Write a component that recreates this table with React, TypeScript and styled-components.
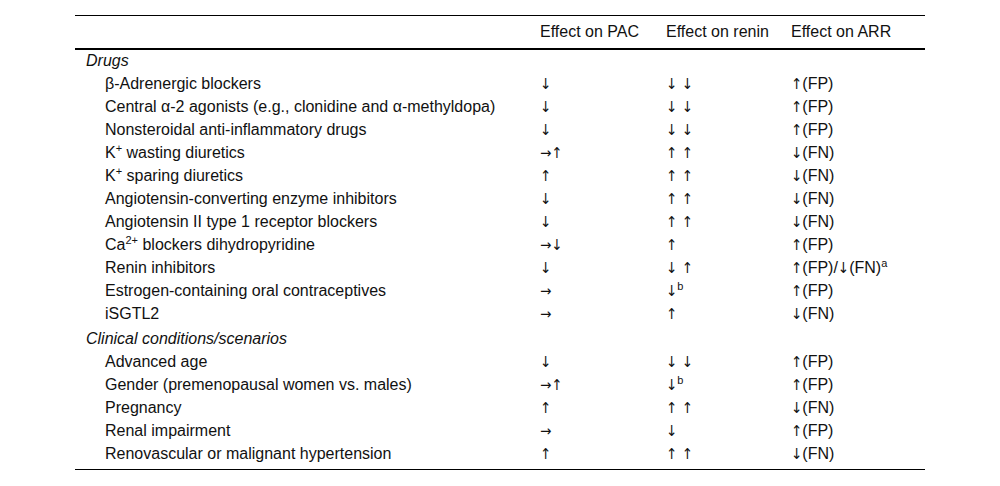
import React from "react";
import styled, { createGlobalStyle } from "styled-components";

const Global = createGlobalStyle`
  html, body { margin: 0; padding: 0; background: #fff; }
  body { font-family: "Liberation Sans", Arial, sans-serif; color: #111; }
`;

const Page = styled.div`
  padding: 15px 75px 0 75px;
`;

const Table = styled.table`
  width: 850px;
  border-collapse: collapse;
  table-layout: fixed;
  font-size: 16px;
  border-top: 1px solid #000;
  border-bottom: 1px solid #000;
`;

const HeadCell = styled.th`
  font-weight: normal;
  text-align: left;
  height: 32px;
  padding: 0 0 0 11px;
  vertical-align: middle;
  line-height: 18px;
  border-bottom: 2px solid #000;
  white-space: nowrap;
`;

const Cell = styled.td<{ $indent?: boolean; $pb?: number }>`
  padding: 0 0 ${(p) => p.$pb ?? 0}px ${(p) => (p.$indent ? 30 : 11)}px;
  height: 23px;
  line-height: 18px;
  vertical-align: middle;
  white-space: nowrap;
  text-align: left;
`;

const GroupCell = styled.td<{ $h: number; $pt?: number }>`
  padding: ${(p) => p.$pt ?? 0}px 0 0 11px;
  height: ${(p) => p.$h}px;
  font-style: italic;
  vertical-align: middle;
  line-height: 18px;
`;

const Arrow = styled.span`
  font-family: "DejaVu Sans Condensed", "DejaVu Sans", sans-serif;
  font-size: 15px;
  line-height: 18px;
`;

const Sup = styled.sup`
  font-size: 11px;
  line-height: 0;
  vertical-align: 0;
  position: relative;
  top: -6px;
`;

const ARROWS = /([↑↓→])/;

const Sym = ({ t }: { t: string }) => (
  <>
    {t.split(ARROWS).map((part, i) =>
      ARROWS.test(part) && part.length === 1 ? <Arrow key={i}>{part}</Arrow> : part
    )}
  </>
);

type Row = {
  label: React.ReactNode;
  pac: string;
  renin: string;
  reninSup?: string;
  arr: string;
  arrSup?: string;
};

const drugs: Row[] = [
  { label: "β-Adrenergic blockers", pac: "↓", renin: "↓ ↓", arr: "↑(FP)" },
  { label: "Central α-2 agonists (e.g., clonidine and α-methyldopa)", pac: "↓", renin: "↓ ↓", arr: "↑(FP)" },
  { label: "Nonsteroidal anti-inflammatory drugs", pac: "↓", renin: "↓ ↓", arr: "↑(FP)" },
  { label: <>K<Sup>+</Sup> wasting diuretics</>, pac: "→↑", renin: "↑ ↑", arr: "↓(FN)" },
  { label: <>K<Sup>+</Sup> sparing diuretics</>, pac: "↑", renin: "↑ ↑", arr: "↓(FN)" },
  { label: "Angiotensin-converting enzyme inhibitors", pac: "↓", renin: "↑ ↑", arr: "↓(FN)" },
  { label: "Angiotensin II type 1 receptor blockers", pac: "↓", renin: "↑ ↑", arr: "↓(FN)" },
  { label: <>Ca<Sup>2+</Sup> blockers dihydropyridine</>, pac: "→↓", renin: "↑", arr: "↑(FP)" },
  { label: "Renin inhibitors", pac: "↓", renin: "↓ ↑", arr: "↑(FP)/↓(FN)", arrSup: "a" },
  { label: "Estrogen-containing oral contraceptives", pac: "→", renin: "↓", reninSup: "b", arr: "↑(FP)" },
  { label: "iSGTL2", pac: "→", renin: "↑", arr: "↓(FN)" },
];

const clinical: Row[] = [
  { label: "Advanced age", pac: "↓", renin: "↓ ↓", arr: "↑(FP)" },
  { label: "Gender (premenopausal women vs. males)", pac: "→↑", renin: "↓", reninSup: "b", arr: "↑(FP)" },
  { label: "Pregnancy", pac: "↑", renin: "↑ ↑", arr: "↓(FN)" },
  { label: "Renal impairment", pac: "→", renin: "↓", arr: "↑(FP)" },
  { label: "Renovascular or malignant hypertension", pac: "↑", renin: "↑ ↑", arr: "↓(FN)" },
];

const DataRows = ({ rows, lastPad }: { rows: Row[]; lastPad?: number }) => (
  <>
    {rows.map((r, i) => {
      const pb = lastPad && i === rows.length - 1 ? lastPad : 0;
      return (
        <tr key={i}>
          <Cell $indent $pb={pb}>{r.label}</Cell>
          <Cell $pb={pb}><Sym t={r.pac} /></Cell>
          <Cell $pb={pb}>
            <Sym t={r.renin} />
            {r.reninSup && <Sup>{r.reninSup}</Sup>}
          </Cell>
          <Cell $pb={pb}>
            <Sym t={r.arr} />
            {r.arrSup && <Sup>{r.arrSup}</Sup>}
          </Cell>
        </tr>
      );
    })}
  </>
);

export default function App() {
  return (
    <>
      <Global />
      <Page>
        <Table>
          <colgroup>
            <col style={{ width: 454 }} />
            <col style={{ width: 126 }} />
            <col style={{ width: 125 }} />
            <col style={{ width: 145 }} />
          </colgroup>
          <thead>
            <tr>
              <HeadCell />
              <HeadCell>Effect on PAC</HeadCell>
              <HeadCell>Effect on renin</HeadCell>
              <HeadCell>Effect on ARR</HeadCell>
            </tr>
          </thead>
          <tbody>
            <tr>
              <GroupCell $h={22} colSpan={4}>Drugs</GroupCell>
            </tr>
            <DataRows rows={drugs} />
            <tr>
              <GroupCell $h={23} $pt={2} colSpan={4}>Clinical conditions/scenarios</GroupCell>
            </tr>
            <DataRows rows={clinical} lastPad={4} />
          </tbody>
        </Table>
      </Page>
    </>
  );
}
